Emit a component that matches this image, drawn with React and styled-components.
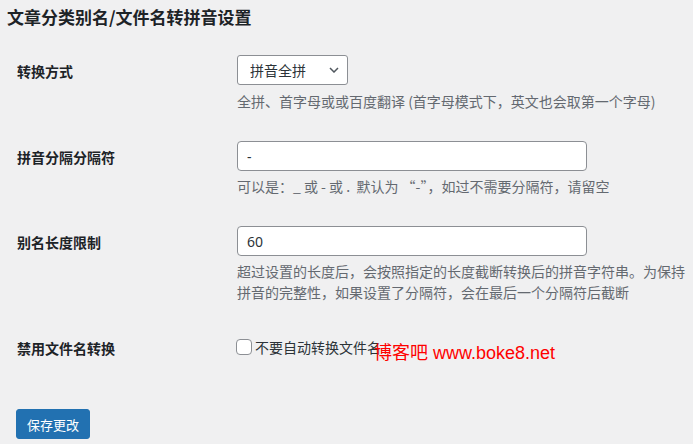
import React from "react";
import styled, { createGlobalStyle } from "styled-components";

const GlobalStyle = createGlobalStyle`
  body {
    margin: 0;
    background: #f0f0f1;
    font-family: "Noto Sans", "Noto Sans CJK SC", sans-serif;
    color: #1d2327;
  }
`;

const Page = styled.div`
  position: relative;
  padding: 6px 0 0 16px;
  min-height: 444px;
  box-sizing: border-box;
`;

const Title = styled.h2`
  margin: 0 0 12px -9px;
  font-size: 17px;
  line-height: 22px;
  font-weight: 700;
  font-family: "Noto Sans CJK SC", sans-serif;
`;

const Row = styled.div`
  display: grid;
  grid-template-columns: 221px 1fr;
  padding: 15px 0 14px;
`;

const Label = styled.div`
  padding: 7px 0 0 1px;
  font-size: 14px;
  line-height: 18px;
  font-weight: 700;
  font-family: "Noto Sans CJK SC", sans-serif;
`;

const Field = styled.div`
  display: flex;
  flex-direction: column;
  align-items: flex-start;
`;

const SelectWrap = styled.div`
  position: relative;
  width: 111px;
  height: 30px;
  svg {
    position: absolute;
    right: 9px;
    top: 12px;
    pointer-events: none;
  }
`;

const Select = styled.select`
  appearance: none;
  width: 100%;
  height: 100%;
  box-sizing: border-box;
  border: 1px solid #8c8f94;
  border-radius: 3px;
  background: #fff;
  padding: 0 24px 0 12px;
  font-size: 14px;
  font-family: "Noto Sans CJK SC", sans-serif;
  color: #2c3338;
`;

const TextInput = styled.input`
  width: 350px;
  height: 30px;
  box-sizing: border-box;
  border: 1px solid #8c8f94;
  border-radius: 4px;
  background: #fff;
  padding: 0 9px;
  font-size: 14px;
  font-family: "Noto Sans", "Noto Sans CJK SC", sans-serif;
  color: #2c3338;
`;

const Desc = styled.p`
  margin: ${(p) => p.$top || 5}px 0 0;
  font-size: 14px;
  line-height: 21px;
  color: #646970;
  font-family: "Noto Sans CJK SC", sans-serif;
  max-width: 448px;
`;

const CheckLabel = styled.label`
  display: flex;
  align-items: center;
  height: 30px;
  gap: 3px;
  margin-left: -1px;
  font-size: 14px;
  color: #2c3338;
  font-family: "Noto Sans CJK SC", sans-serif;
`;

const Checkbox = styled.span`
  width: 16px;
  height: 16px;
  box-sizing: border-box;
  border: 1px solid #8c8f94;
  border-radius: 4px;
  background: #fff;
`;

const Submit = styled.div`
  padding-top: 33px;
`;

const Button = styled.button`
  height: 30px;
  padding: 0 10px;
  border: 1px solid #2271b1;
  border-radius: 3px;
  background: #2271b1;
  color: #fff;
  font-size: 13px;
  font-family: "Noto Sans CJK SC", sans-serif;
`;

const Watermark = styled.div`
  position: absolute;
  left: 374px;
  top: 342px;
  font-size: 18px;
  line-height: 22px;
  color: #ff0000;
  font-family: "Liberation Sans", "Noto Sans CJK SC", sans-serif;
`;

function Chevron() {
  return (
    <svg width="10" height="6" viewBox="0 0 10 6">
      <path d="M1 1l4 4 4-4" fill="none" stroke="#50575e" strokeWidth="1.5" />
    </svg>
  );
}

export default function App() {
  return (
    <Page>
      <GlobalStyle />
      <Title>文章分类别名/文件名转拼音设置</Title>
      <Row>
        <Label>转换方式</Label>
        <Field>
          <SelectWrap>
            <Select defaultValue="full">
              <option value="full">拼音全拼</option>
            </Select>
            <Chevron />
          </SelectWrap>
          <Desc $top={6}>全拼、首字母或或百度翻译 (首字母模式下，英文也会取第一个字母)</Desc>
        </Field>
      </Row>
      <Row>
        <Label>拼音分隔分隔符</Label>
        <Field>
          <TextInput defaultValue="-" />
          <Desc>可以是：_ 或 - 或 .&nbsp; 默认为 “-”，如过不需要分隔符，请留空</Desc>
        </Field>
      </Row>
      <Row>
        <Label>别名长度限制</Label>
        <Field>
          <TextInput defaultValue="60" />
          <Desc>超过设置的长度后，会按照指定的长度截断转换后的拼音字符串。为保持拼音的完整性，如果设置了分隔符，会在最后一个分隔符后截断</Desc>
        </Field>
      </Row>
      <Row>
        <Label>禁用文件名转换</Label>
        <Field>
          <CheckLabel>
            <Checkbox />
            不要自动转换文件名
          </CheckLabel>
        </Field>
      </Row>
      <Submit>
        <Button>保存更改</Button>
      </Submit>
      <Watermark>博客吧 www.boke8.net</Watermark>
    </Page>
  );
}
